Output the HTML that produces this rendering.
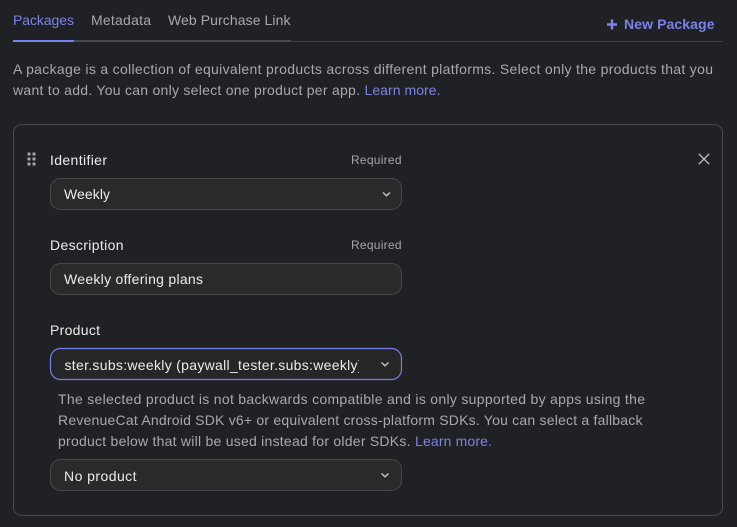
<!DOCTYPE html>
<html lang="en">
<head>
<meta charset="utf-8">
<title>Packages</title>
<style>
html,body{margin:0;padding:0;background:#202125;width:737px;height:527px;overflow:hidden}
svg{display:block}
text{font-family:"Liberation Sans",sans-serif;font-size:14px;fill:#eeeeee}
.m{fill:#a9a9ab}
.b{fill:#7b83e4}
.r{font-size:12px;fill:#a5a5a7}
.n{fill:#ececec}
</style>
</head>
<body>
<svg width="737" height="527" viewBox="0 0 737 527" xmlns="http://www.w3.org/2000/svg">
  <rect width="737" height="527" fill="#202125"/>

  <!-- tabs -->
  <rect x="13" y="41" width="710" height="1" fill="#3d3e41"/>
  <rect x="13" y="40" width="278" height="2" fill="#4a4b4e"/>
  <rect x="13" y="40" width="61" height="2" fill="#747ff0"/>
  <text x="13" y="25" textLength="61" class="b">Packages</text>
  <text x="91" y="25" textLength="60" class="m">Metadata</text>
  <text x="168" y="25" textLength="122.500" class="m">Web Purchase Link</text>

  <!-- new package -->
  <path d="M612 19.500v10M607 24.500h10" stroke="#7d85f0" stroke-width="2.400" fill="none"/>
  <text x="624" y="29" textLength="90.500" style="fill:#7a82ea;font-weight:bold">New Package</text>

  <!-- intro -->
  <text x="13" y="74" textLength="700" class="m">A package is a collection of equivalent products across different platforms. Select only the products that you</text>
  <text x="13" y="95" textLength="347" class="m">want to add. You can only select one product per app.</text>
  <text x="364.500" y="95" textLength="76" class="b">Learn more.</text>

  <!-- card -->
  <rect x="13.500" y="124.500" width="709" height="391" rx="8" fill="#202125" stroke="#47484b"/>

  <!-- drag handle -->
  <g fill="#a6a6a8">
    <rect x="27.500" y="152.500" width="3" height="3" rx=".5"/>
    <rect x="32.500" y="152.500" width="3" height="3" rx=".5"/>
    <rect x="27.500" y="157.500" width="3" height="3" rx=".5"/>
    <rect x="32.500" y="157.500" width="3" height="3" rx=".5"/>
    <rect x="27.500" y="162.500" width="3" height="3" rx=".5"/>
    <rect x="32.500" y="162.500" width="3" height="3" rx=".5"/>
  </g>

  <!-- close -->
  <path d="M698.800 153.800l10.400 10.400M709.200 153.800l-10.400 10.400" stroke="#c4c4c5" stroke-width="1.300" fill="none"/>

  <!-- identifier -->
  <text x="50" y="165" textLength="57" class="n">Identifier</text>
  <text x="351" y="164" textLength="50.500" class="r">Required</text>
  <rect x="50.500" y="178.500" width="351" height="31" rx="10" fill="#2a2a2b" stroke="#484849"/>
  <text x="64" y="199" textLength="46" class="n">Weekly</text>
  <path d="M383 192.500l3.500 3.300 3.500-3.300" stroke="#c4c4c5" stroke-width="1.400" fill="none"/>

  <!-- description -->
  <text x="50" y="250" textLength="73.500" class="n">Description</text>
  <text x="351" y="249" textLength="50.500" class="r">Required</text>
  <rect x="50.500" y="263.500" width="351" height="31" rx="10" fill="#2a2a2b" stroke="#484849"/>
  <text x="64" y="284" textLength="139" class="n">Weekly offering plans</text>

  <!-- product -->
  <text x="50" y="335" textLength="50" class="n">Product</text>
  <rect x="50.500" y="348.500" width="351" height="31" rx="10" fill="#262627" stroke="#7580ec" stroke-width="1.200"/>
  <svg x="64" y="350" width="295" height="28">
    <text x="0.500" y="20" textLength="298" class="n">ster.subs:weekly (paywall_tester.subs:weekly)</text>
  </svg>
  <path d="M381.500 362.500l3.500 3.300 3.500-3.300" stroke="#c4c4c5" stroke-width="1.400" fill="none"/>

  <!-- help -->
  <text x="58" y="404" textLength="587" class="m">The selected product is not backwards compatible and is only supported by apps using the</text>
  <text x="58" y="425" textLength="584.500" class="m">RevenueCat Android SDK v6+ or equivalent cross-platform SDKs. You can select a fallback</text>
  <text x="58" y="446" textLength="352.500" class="m">product below that will be used instead for older SDKs.</text>
  <text x="415" y="446" textLength="77" class="b">Learn more.</text>

  <!-- fallback -->
  <rect x="50.500" y="459.500" width="351" height="31" rx="10" fill="#2a2a2b" stroke="#484849"/>
  <text x="64" y="481" textLength="72.500" class="n">No product</text>
  <path d="M381.500 473.500l3.500 3.300 3.500-3.300" stroke="#c4c4c5" stroke-width="1.400" fill="none"/>
</svg>
</body>
</html>
